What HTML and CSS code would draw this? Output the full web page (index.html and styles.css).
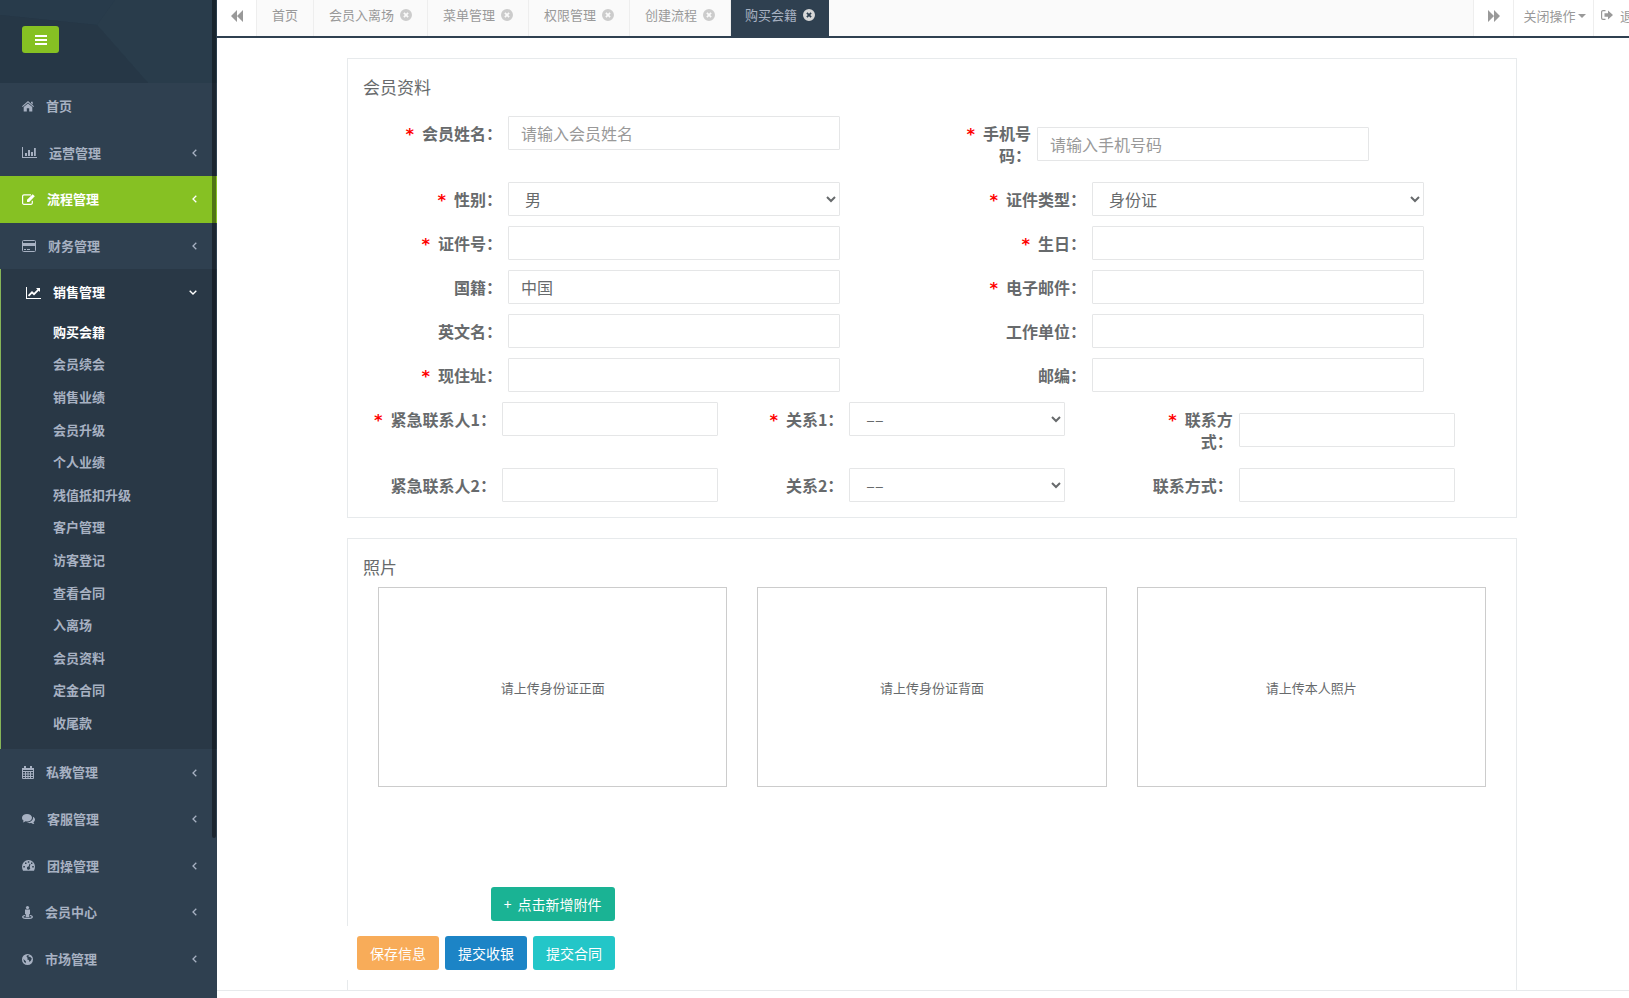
FILE: index.html
```html
<!DOCTYPE html>
<html lang="zh-CN">
<head>
<meta charset="utf-8">
<title>购买会籍</title>
<link rel="stylesheet" href="styles.css">
</head>
<body>
<svg class="defs" aria-hidden="true">
  <symbol id="i-left" viewBox="0 0 5 8"><path d="M4.3.7 1 4l3.300 3.300" fill="none" stroke="currentColor" stroke-width="1.300"/></symbol>
  <symbol id="i-down" viewBox="0 0 8 5"><path d="M.7.7 4 4 7.300.7" fill="none" stroke="currentColor" stroke-width="1.400"/></symbol>
  <symbol id="i-close" viewBox="0 0 12 12"><path fill-rule="evenodd" fill="currentColor" d="M6 0a6 6 0 1 1 0 12A6 6 0 0 1 6 0zM3.300 4.500 4.800 6 3.300 7.500 4.500 8.700 6 7.200 7.500 8.700 8.700 7.500 7.200 6 8.700 4.500 7.500 3.300 6 4.800 4.500 3.300z"/></symbol>
</svg>
<div class="app">
  <aside class="sidebar">
    <header class="brand">
      <svg class="facets" viewBox="0 0 217 83" preserveAspectRatio="none" aria-hidden="true">
        <path fill="#283b4b" d="M0 0H115L97 25 0 15z"/>
        <path fill="#293c4b" d="M115 0H217V83H148L97 25z"/>
        <path fill="#263746" d="M0 15 97 25 148 83H0z"/>
      </svg>
      <button class="toggle" type="button" aria-label="菜单"><svg width="12" height="10" viewBox="0 0 12 10"><path fill="#fff" d="M0 0h12v2H0zM0 4h12v2H0zM0 8h12v2H0z"/></svg></button>
    </header>
    <nav class="menu">
      <a class="item" href="#"><svg width="12" height="11" viewBox="0 0 12 11"><path fill="currentColor" d="M6 0 12 5.200 11.300 6 6 1.500.7 6 0 5.200zM9 .8h1.700V3.500L9 2zM6 2.400 10.300 6v4.500H7.200V7.300H4.800v3.200H1.700V6z"/></svg><span>首页</span></a>
      <a class="item" href="#"><svg width="15" height="11" viewBox="0 0 15 11"><path fill="currentColor" d="M0 0h1v10h14v1H0zM3 6h2v3H3zM6 3h2v6H6zM9 5h2v4H9zM12 1h1.800v8H12z"/></svg><span>运营管理</span><svg class="arrow" width="5" height="8"><use href="#i-left"/></svg></a>
      <a class="item hover" href="#"><svg width="13" height="11" viewBox="0 0 13 11"><path fill="none" stroke="currentColor" stroke-width="1.200" d="M9 .8H2A1.400 1.400 0 0 0 .6 2.200v6.600A1.400 1.400 0 0 0 2 10.300h6.800A1.400 1.400 0 0 0 10.300 9V6.800"/><path fill="currentColor" d="M10.700.2 12.800 2.300 7.200 7.900H5V5.800z"/></svg><span>流程管理</span><svg class="arrow" width="5" height="8"><use href="#i-left"/></svg></a>
      <a class="item" href="#"><svg width="14" height="12" viewBox="0 0 14 12"><path fill="none" stroke="currentColor" d="M1.500.5h11a1 1 0 0 1 1 1v9a1 1 0 0 1-1 1h-11a1 1 0 0 1-1-1v-9a1 1 0 0 1 1-1z"/><path fill="currentColor" d="M0 3h14v3H0zM2 9h2v1H2zM5 9h3v1H5z"/></svg><span>财务管理</span><svg class="arrow" width="5" height="8"><use href="#i-left"/></svg></a>
      <div class="group">
        <a class="item" href="#"><svg width="15" height="12" viewBox="0 0 15 12"><path fill="currentColor" d="M0 0h1v11h14v1H0z"/><path fill="none" stroke="currentColor" stroke-width="1.800" d="M2.500 8.800 6 5.300 8 7.200 12.500 2.700"/><path fill="currentColor" d="M10 1h4v4z"/></svg><span>销售管理</span><svg class="arrow" width="8" height="5"><use href="#i-down"/></svg></a>
        <a class="sub current" href="#">购买会籍</a>
        <a class="sub" href="#">会员续会</a>
        <a class="sub" href="#">销售业绩</a>
        <a class="sub" href="#">会员升级</a>
        <a class="sub" href="#">个人业绩</a>
        <a class="sub" href="#">残值抵扣升级</a>
        <a class="sub" href="#">客户管理</a>
        <a class="sub" href="#">访客登记</a>
        <a class="sub" href="#">查看合同</a>
        <a class="sub" href="#">入离场</a>
        <a class="sub" href="#">会员资料</a>
        <a class="sub" href="#">定金合同</a>
        <a class="sub" href="#">收尾款</a>
      </div>
      <a class="item" href="#"><svg width="12" height="13" viewBox="0 0 12 13"><path fill="none" stroke="currentColor" d="M.5 2.500h11v10H.5zM.5 5.500h11M.5 8h11M.5 10.500h11M3.500 5v7.500M6 5v7.500M8.500 5v7.500"/><path fill="currentColor" d="M0 2h12v2H0zM2 0h2v3H2zM8 0h2v3H8z"/></svg><span>私教管理</span><svg class="arrow" width="5" height="8"><use href="#i-left"/></svg></a>
      <a class="item" href="#"><svg width="13" height="11" viewBox="0 0 13 11"><path fill="currentColor" d="M5 0c2.800 0 5 1.600 5 3.700S7.800 7.400 5 7.400L3.500 7.300C2.800 8 1.800 8.400.8 8.500L1.700 6.700C.6 6 0 4.900 0 3.700 0 1.600 2.200 0 5 0z"/><path fill="currentColor" d="M11 2.700c1.200.6 2 1.600 2 2.800 0 1.200-.6 2-1.600 2.700l.9 1.900C11 10 10 9.600 9.300 9 7.500 9.400 5.800 9 4.800 8.300 8.500 8.400 11.600 6 11 2.700z"/></svg><span>客服管理</span><svg class="arrow" width="5" height="8"><use href="#i-left"/></svg></a>
      <a class="item" href="#"><svg width="13" height="11" viewBox="0 0 13 11"><path fill="currentColor" fill-rule="evenodd" d="M6.500 0A6.500 6.500 0 0 1 13 6.500c0 1.500-.4 2.800-1 4.200H1C.4 9.300 0 8 0 6.500A6.500 6.500 0 0 1 6.500 0zM1.300 6h1.600v1.500H1.300zM3 2.600h1.500v1.500H3zM5.800 1.300h1.500v1.500H5.800zM9 2.600h1.400v1.500H9zM10.200 6h1.600v1.500h-1.600zM7.500 3.700 6.600 6.500A1.600 1.600 0 1 0 7.700 7L8.500 4z"/></svg><span>团操管理</span><svg class="arrow" width="5" height="8"><use href="#i-left"/></svg></a>
      <a class="item" href="#"><svg width="11" height="13" viewBox="0 0 11 13"><circle cx="5.500" cy="1.600" r="1.600" fill="currentColor"/><path fill="currentColor" d="M3 3.500h5V8h-.7v3.300H3.700V8H3z"/><path fill="none" stroke="currentColor" stroke-width="1.200" d="M3 9.500C-.5 10.200-.3 12.400 5.500 12.400S11.500 10.200 8 9.500"/></svg><span>会员中心</span><svg class="arrow" width="5" height="8"><use href="#i-left"/></svg></a>
      <a class="item" href="#"><svg width="11" height="11" viewBox="0 0 11 11"><circle cx="5.500" cy="5.500" r="5.500" fill="currentColor"/><path fill="#2f4050" d="M5 1.200 7.300 1.500 6.300 3l1.700-.2L9.800 4.500 9 6.500 7.500 8 6.800 6 5 5.300 5.800 4 4.500 2.800zM1.300 5 2.800 6.300l1.200 1.300-.5 1.600L2 7.800z"/></svg><span>市场管理</span><svg class="arrow" width="5" height="8"><use href="#i-left"/></svg></a>
    </nav>
    <div class="scrollbar"></div>
  </aside>

  <div class="page">
    <div class="tabs">
      <button class="roll" type="button" aria-label="向左"><svg width="12" height="12" viewBox="0 0 12 12"><path fill="currentColor" d="M6 0v12L0 6zM12 0v12L6 6z"/></svg></button>
      <nav class="tablist">
        <a class="tab" href="#">首页</a>
        <a class="tab" href="#">会员入离场<svg width="12" height="12"><use href="#i-close"/></svg></a>
        <a class="tab" href="#">菜单管理<svg width="12" height="12"><use href="#i-close"/></svg></a>
        <a class="tab" href="#">权限管理<svg width="12" height="12"><use href="#i-close"/></svg></a>
        <a class="tab" href="#">创建流程<svg width="12" height="12"><use href="#i-close"/></svg></a>
        <a class="tab active" href="#">购买会籍<svg width="12" height="12"><use href="#i-close"/></svg></a>
      </nav>
      <button class="roll right" type="button" aria-label="向右"><svg width="12" height="12" viewBox="0 0 12 12"><path fill="currentColor" d="M0 0v12l6-6zM6 0v12l6-6z"/></svg></button>
      <button class="roll ops" type="button">关闭操作<svg width="8" height="4" viewBox="0 0 8 4"><path fill="currentColor" d="M0 0h8L4 4z"/></svg></button>
      <a class="roll exit" href="#"><svg width="12" height="10" viewBox="0 0 12 10"><path fill="none" stroke="currentColor" stroke-width="1.200" d="M4.500.6H2A1.400 1.400 0 0 0 .6 2v6A1.400 1.400 0 0 0 2 9.400h2.500"/><path fill="currentColor" d="M3.500 3.200H7V.5L12 5 7 9.500V6.800H3.500z"/></svg>退出</a>
    </div>

    <main class="content">
      <form class="form">
        <section class="panel">
          <h2>会员资料</h2>
          <div class="rows">
            <div class="row two">
              <div class="field"><label for="name"><i>*</i>会员姓名：</label><input id="name" type="text" placeholder="请输入会员姓名"></div>
              <div class="field wrapped phone"><label for="phone"><i>*</i>手机号码：</label><input id="phone" type="text" placeholder="请输入手机号码"></div>
            </div>
            <div class="row two">
              <div class="field"><label for="sex"><i>*</i>性别：</label><select id="sex"><option>男</option><option>女</option></select></div>
              <div class="field"><label for="idtype"><i>*</i>证件类型：</label><select id="idtype"><option>身份证</option></select></div>
            </div>
            <div class="row two">
              <div class="field"><label for="idno"><i>*</i>证件号：</label><input id="idno" type="text"></div>
              <div class="field"><label for="birth"><i>*</i>生日：</label><input id="birth" type="text"></div>
            </div>
            <div class="row two">
              <div class="field"><label for="nation">国籍：</label><input id="nation" type="text" value="中国"></div>
              <div class="field"><label for="mail"><i>*</i>电子邮件：</label><input id="mail" type="text"></div>
            </div>
            <div class="row two">
              <div class="field"><label for="ename">英文名：</label><input id="ename" type="text"></div>
              <div class="field"><label for="work">工作单位：</label><input id="work" type="text"></div>
            </div>
            <div class="row two">
              <div class="field"><label for="addr"><i>*</i>现住址：</label><input id="addr" type="text"></div>
              <div class="field"><label for="zip">邮编：</label><input id="zip" type="text"></div>
            </div>
            <div class="row three">
              <div class="field first"><label for="c1"><i>*</i>紧急联系人1：</label><input id="c1" type="text"></div>
              <div class="field"><label for="r1"><i>*</i>关系1：</label><select id="r1"><option>––</option></select></div>
              <div class="field wrapped"><label for="t1"><i>*</i>联系方式：</label><input id="t1" type="text"></div>
            </div>
            <div class="row three">
              <div class="field first"><label for="c2">紧急联系人2：</label><input id="c2" type="text"></div>
              <div class="field"><label for="r2">关系2：</label><select id="r2"><option>––</option></select></div>
              <div class="field"><label for="t2">联系方式：</label><input id="t2" type="text"></div>
            </div>
          </div>
        </section>

        <section class="panel photos-panel">
          <h2>照片</h2>
          <div class="photos">
            <div class="photo">请上传身份证正面</div>
            <div class="photo">请上传身份证背面</div>
            <div class="photo">请上传本人照片</div>
            <div class="attach"><button class="btn add" type="button"><span>+</span>点击新增附件</button></div>
          </div>
        </section>
      </form>
      <div class="actions">
        <button class="btn save" type="button">保存信息</button>
        <button class="btn pay" type="button">提交收银</button>
        <button class="btn contract" type="button">提交合同</button>
      </div>
    </main>
    <footer class="footer"></footer>
  </div>
</div>
</body>
</html>
```
FILE: styles.css
```css
* { box-sizing: border-box; }
body {
  margin: 0;
  font-family: "Noto Sans CJK SC", sans-serif;
  font-size: 13px;
  color: #676a6c;
  background: #fff;
}
a { text-decoration: none; color: inherit; }
button, input, select { font: inherit; color: inherit; }
svg { flex: none; }
.defs { display: none; }
.app { display: flex; height: 100vh; overflow: hidden; }

/* sidebar */
.sidebar { position: relative; flex: none; width: 217px; background: #2f4050; color: #a7b1c2; overflow: hidden; }
.brand { position: relative; height: 83px; padding: 26px 22px; background: #263848; }
.facets { position: absolute; inset: 0; width: 100%; height: 100%; }
.toggle {
  position: relative; display: flex; align-items: center; justify-content: center;
  width: 37px; height: 27px; padding: 0; border: 0; border-radius: 3px; background: #86c123;
}
.item {
  display: flex; align-items: center; gap: 12px;
  padding: 14px 20px 14px 22px; font-weight: 700; line-height: 1.43;
}
.item .arrow { margin-left: auto; }
.item.hover { background: #86c123; color: #fff; }
.group { padding-bottom: 10px; border-left: 1px solid #86b558; background: #293846; }
.group .item { padding-left: 25px; color: #fff; }
.sub { display: block; padding: 7px 10px 7px 52px; font-weight: 700; line-height: 1.43; }
.sub.current { color: #fff; }
.scrollbar {
  position: absolute; top: 0; right: 1px; width: 4px; height: 84%;
  border-radius: 0 0 4px 4px; background: rgba(0, 0, 0, .4);
}

/* tabs */
.page { flex: 1; min-width: 0; display: flex; flex-direction: column; }
.tabs { display: flex; flex: none; height: 38px; border-bottom: 2px solid #2f4050; background: #fafafa; color: #999; overflow: hidden; }
.roll {
  display: flex; flex: none; align-items: center; justify-content: center; width: 40px; padding: 0 0 4px;
  border: 0; border-right: 1px solid #eee; background: #fff;
}
.tablist { display: flex; flex: 1; }
.tab { display: flex; align-items: center; gap: 6px; padding: 0 15px 7px; border-right: 1px solid #eee; }
.tab svg { color: #ccc; }
.tab.active { padding: 0 14px 7px; border-right: 0; background: #2f4050; color: #a7b1c2; }
.tab.active svg { color: #d8d8d8; }
.roll.right { width: 41px; border-left: 1px solid #eee; }
.ops { width: 80px; gap: 2px; padding: 0 0 5px 2px; }
.exit { justify-content: flex-start; gap: 7px; width: 35px; padding: 0 0 6px 7px; border-right: 0; white-space: nowrap; }

/* form */
.content { position: relative; flex: 1; min-height: 0; overflow: hidden; }
.form { display: flex; flex-direction: column; gap: 20px; height: 100%; padding: 20px 112px 0 130px; }
.panel { flex: none; padding: 15px 0; border: 1px solid #e7eaec; }
.panel h2 { margin: 0 15px; font-size: 17px; line-height: 26px; font-weight: 400; }
.rows { display: flex; flex-direction: column; gap: 10px; margin-top: 16px; font-size: 16px; }
.row { display: grid; }
.two { grid-template-columns: 1fr 1fr; }
.three { grid-template-columns: 1fr 1fr 1fr; }
.field { display: flex; align-items: flex-start; gap: 6px; }
.field label { flex: none; width: 154px; padding-top: 6px; line-height: 22px; font-weight: 700; text-align: right; }
.field i {
  display: inline-block; width: 17px; font-family: "DejaVu Sans Mono", monospace; font-style: normal;
  line-height: 16px; color: #f00; text-align: left;
}
.field input, .field select {
  width: 332px; height: 34px; padding: 6px 12px; border: 1px solid #e5e6e7; border-radius: 1px; background: #fff; outline: 0;
}
.field select { padding: 0 12px; }
.field input::placeholder { color: #999; }
.three .field label { width: 106px; padding-left: 24px; }
.three .first label { width: 148px; padding-left: 0; }
.three .field input, .three .field select { width: 216px; }
.wrapped label { padding-bottom: 6px; }
.wrapped input { margin-top: 11px; }
.field.phone label { width: 99px; padding-left: 10px; }

.photos-panel { flex: 1; border-bottom: 0; }
.photos { display: grid; grid-template-columns: 1fr 1fr 1fr; column-gap: 30px; row-gap: 100px; margin: 7px 30px 0; }
.photo { display: flex; align-items: center; justify-content: center; height: 200px; border: 1px solid #ccc; }
.attach { display: flex; justify-content: center; }
.btn { height: 34px; padding: 0 13px; border: 0; border-radius: 3px; color: #fff; font-size: 14px; }
.btn span { margin-right: 6px; }
.add { background: #1ab394; }
.save { background: #f8ac59; }
.pay { background: #1c84c6; }
.contract { background: #23c6c8; }
.actions {
  position: absolute; left: 120px; right: 120px; bottom: 10px;
  display: flex; gap: 6px; padding: 10px 20px; background: #fff;
}
.footer { flex: none; height: 8px; border-top: 1px solid #e7eaec; background: #fff; }
```
